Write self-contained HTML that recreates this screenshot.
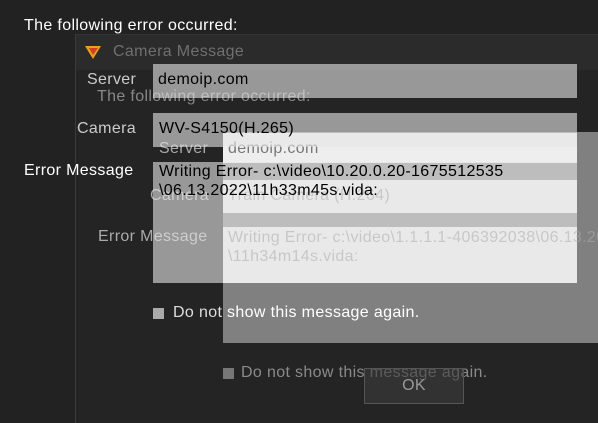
<!DOCTYPE html>
<html><head><meta charset="utf-8"><style>
*{margin:0;padding:0;box-sizing:border-box}
body{width:598px;height:423px;overflow:hidden;background:#222;font-family:"Liberation Sans",sans-serif;font-size:16px;position:relative;letter-spacing:0.35px}
.a{position:absolute;white-space:nowrap}
</style></head><body>
<div class="a" style="left:75px;top:34px;width:523px;height:389px;background:#242424;border-left:1px solid #3a3a3a;border-top:1px solid #333"></div>
<div class="a" style="left:76px;top:35px;width:522px;height:35px;background:#2b2b2b"></div>
<svg class="a" style="left:84px;top:44px" width="18" height="16" viewBox="0 0 18 16"><path d="M1 2 L17 2 L9 15 Z" fill="#e8a020"/><path d="M5 4 L14 4 L9 11Z" fill="#d04020"/></svg>
<div class="a" style="left:113px;top:43px;color:#6f6f6f;font-size:16px">Camera Message</div>

<!-- back layer -->
<div class="a" style="left:223px;top:132px;width:375px;height:211px;background:#808080"></div>
<div class="a" style="left:223px;top:133px;width:354px;height:30px;background:#eee"></div>
<div class="a" style="left:223px;top:180px;width:354px;height:33px;background:#eee"></div>
<div class="a" style="left:223px;top:227px;width:354px;height:56px;background:#eee"></div>
<div class="a" style="left:97px;top:88px;color:#888">The following error occurred:</div>
<div class="a" style="left:159px;top:140px;color:#aaa">Server</div>
<div class="a" style="left:228px;top:140px;color:#777">demoip.com</div>
<div class="a" style="left:150px;top:187px;color:#aaa">Camera</div>
<div class="a" style="left:228px;top:187px;color:#999">Train Camera (H.264)</div>
<div class="a" style="left:98px;top:228px;color:#aaa">Error Message</div>
<div class="a" style="left:228px;top:228px;color:#999;line-height:19px">Writing Error- c:\video\1.1.1.1-406392038\06.13.2022<br>\11h34m14s.vida:</div>
<div class="a" style="left:223px;top:368px;width:11px;height:11px;background:#777"></div>
<div class="a" style="left:241px;top:364px;color:#8a8a8a">Do not show this message again.</div>
<div class="a" style="left:364px;top:368px;width:100px;height:36px;border:1px solid #555;background:rgba(60,60,60,.6)"></div>
<div class="a" style="left:364px;top:377px;width:100px;text-align:center;color:#999">OK</div>

<!-- front layer -->
<div class="a" style="left:24px;top:17px;color:#fff">The following error occurred:</div>
<div class="a" style="left:153px;top:64px;width:424px;height:34px;background:rgba(230,230,230,.6)"></div>
<div class="a" style="left:153px;top:113px;width:424px;height:34px;background:rgba(230,230,230,.6)"></div>
<div class="a" style="left:153px;top:162px;width:424px;height:121px;background:rgba(230,230,230,.6)"></div>
<div class="a" style="left:87px;top:71px;color:#ccc">Server</div>
<div class="a" style="left:158px;top:71px;color:#000">demoip.com</div>
<div class="a" style="left:77px;top:120px;color:#ccc">Camera</div>
<div class="a" style="left:159px;top:120px;color:#000">WV-S4150(H.265)</div>
<div class="a" style="left:24px;top:162px;color:#fff">Error Message</div>
<div class="a" style="left:159px;top:162px;color:#000;line-height:19px">Writing Error- c:\video\10.20.0.20-1675512535<br>\06.13.2022\11h33m45s.vida:</div>
<div class="a" style="left:153px;top:308px;width:11px;height:11px;background:#aaa"></div>
<div class="a" style="left:173px;top:304px;color:#ddd">Do not <span style="color:#fff">show this message again.</span></div>
</body></html>
